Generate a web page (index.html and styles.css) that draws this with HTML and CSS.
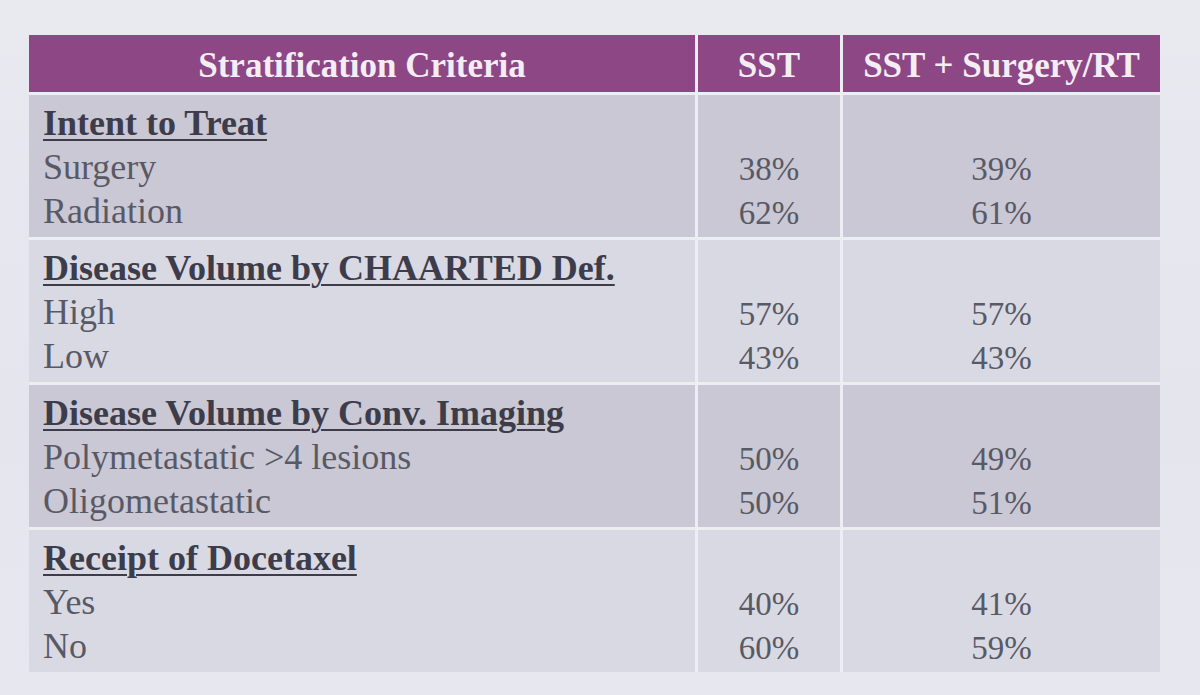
FILE: index.html
```html
<!DOCTYPE html>
<html>
<head>
<meta charset="utf-8">
<link rel="stylesheet" href="styles.css">
</head>
<body>
<div class="slide">
  <div class="table">
    <div class="th">Stratification Criteria</div>
    <div class="th">SST</div>
    <div class="th">SST + Surgery/RT</div>

    <div class="cell label dark"><span class="title">Intent to Treat</span><span>Surgery</span><span>Radiation</span></div>
    <div class="cell val dark"><span>&nbsp;</span><span>38%</span><span>62%</span></div>
    <div class="cell val dark"><span>&nbsp;</span><span>39%</span><span>61%</span></div>

    <div class="cell label light"><span class="title">Disease Volume by CHAARTED Def.</span><span>High</span><span>Low</span></div>
    <div class="cell val light"><span>&nbsp;</span><span>57%</span><span>43%</span></div>
    <div class="cell val light"><span>&nbsp;</span><span>57%</span><span>43%</span></div>

    <div class="cell label dark"><span class="title">Disease Volume by Conv. Imaging</span><span>Polymetastatic &gt;4 lesions</span><span>Oligometastatic</span></div>
    <div class="cell val dark"><span>&nbsp;</span><span>50%</span><span>50%</span></div>
    <div class="cell val dark"><span>&nbsp;</span><span>49%</span><span>51%</span></div>

    <div class="cell label light"><span class="title">Receipt of Docetaxel</span><span>Yes</span><span>No</span></div>
    <div class="cell val light"><span>&nbsp;</span><span>40%</span><span>60%</span></div>
    <div class="cell val light"><span>&nbsp;</span><span>41%</span><span>59%</span></div>
  </div>
</div>
</body>
</html>
```
FILE: styles.css
```css
html, body {
  margin: 0;
  padding: 0;
}
body {
  width: 1200px;
  height: 695px;
  overflow: hidden;
  background: linear-gradient(180deg, #e9eaf0 0%, #e4e5ed 60%, #e7e8ef 100%);
  font-family: "Liberation Serif", "Times New Roman", serif;
}
.slide {
  padding: 35px 0 0 29px;
}
.table {
  display: grid;
  grid-template-columns: 666px 142px 317px;
  grid-template-rows: 57px repeat(4, 142px);
  gap: 3px;
  width: 1131px;
  background: #eceef3;
}
.th {
  background: #8c4784;
  color: #f4eef4;
  font-weight: bold;
  font-size: 35px;
  padding-top: 5px;
  display: flex;
  align-items: center;
  justify-content: center;
}
.cell {
  display: flex;
  flex-direction: column;
  padding-top: 6px;
  font-size: 36px;
  color: #595966;
}
.cell span {
  height: 44px;
  line-height: 44px;
  white-space: nowrap;
}
.label {
  padding-left: 14px;
}
.val {
  align-items: center;
  font-size: 33px;
  padding-top: 8px;
}
.title {
  font-weight: bold;
  font-size: 36px;
  color: #3d3c4a;
  text-decoration: underline;
  text-decoration-thickness: 2px;
  text-underline-offset: 4px;
  align-self: flex-start;
}
.dark {
  background: #c9c8d4;
}
.light {
  background: #d8d9e3;
}
```
